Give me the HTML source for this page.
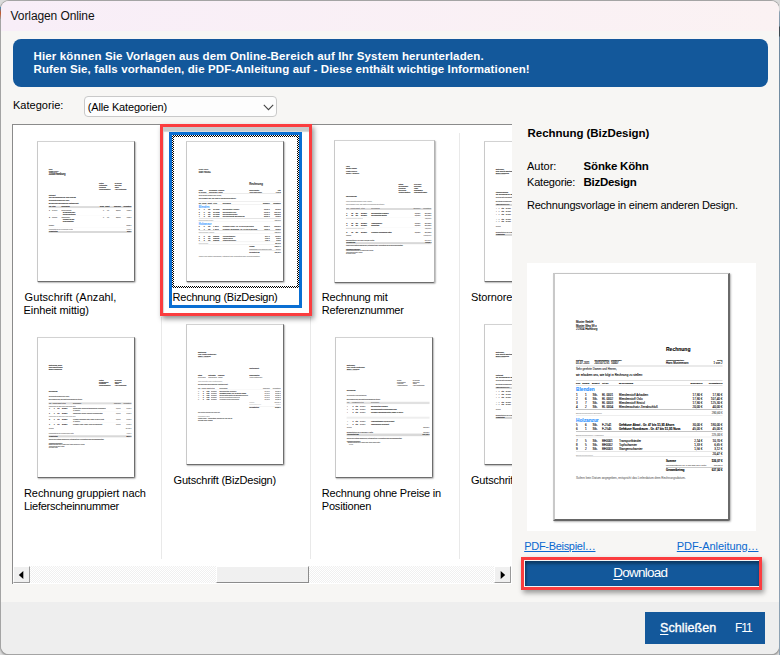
<!DOCTYPE html>
<html lang="de"><head><meta charset="utf-8"><title>Vorlagen Online</title>
<style>
*{box-sizing:border-box;margin:0;padding:0}
html,body{width:780px;height:655px;overflow:hidden}
body{position:relative;background:#dcdcdc;font-family:"Liberation Sans",sans-serif;font-size:11.5px;color:#000}
.abs,body>div,body>span,body>a{position:absolute}
#edgeR{z-index:3;left:779px;top:0;width:1px;height:655px;background:linear-gradient(#d8d8d8 0,#d8d8d8 10px,#8fa3b4 12px,#7d93a6 26px,#3c4a52 27px,#3c4a52 36px,#6f8aa0 37px,#8fa3b4 100%)}
#edgeL{z-index:3;left:0;top:7px;width:1px;height:12px;background:linear-gradient(#3f8fc0,#c8562a 50%,#9a9a9a)}
#win{left:1px;top:1px;width:778px;height:652.5px;border-radius:8px;overflow:hidden;background:#f7f6f4;box-shadow:0 0 0 1px #a4a4a4,0 1px 2px 1px rgba(0,0,0,.35)}
#tb{position:absolute;left:0;top:0;width:100%;height:30px;background:linear-gradient(90deg,#f8eef8,#fbf2f3)}
#ft{position:absolute;left:0;top:601px;width:100%;height:52px;background:#eeeeee}
#title{left:10px;top:9px;font-size:12px;line-height:15px;white-space:nowrap;color:#111}
#banner{left:13px;top:39px;width:755px;height:48px;border-radius:8px;background:#13589b}
#banner p{position:absolute;left:20.5px;white-space:nowrap;color:#fff;font-weight:bold;font-size:11.5px;line-height:13px}
.lbl{white-space:nowrap;line-height:13px;font-size:11px}
.lbl.b{font-size:11.5px}
#combo{left:84px;top:96px;width:193px;height:21px;border:1px solid #c9c9c9;border-radius:4px;background:#fdfdfd}
#combo span{position:absolute;left:3px;top:4px;font-size:11px;line-height:13px;white-space:nowrap}
#combo svg{position:absolute;left:178px;top:7px}
#list{left:12px;top:124px;width:500px;height:460px;background:#fff;border-top:1px solid #8b8b8b;border-left:1px solid #8b8b8b;overflow:hidden}
#list>*{position:absolute}
.col{top:8px;width:1px;height:426px;background:#e9e9e9}
.th{position:absolute;width:98px;height:141px;background:#fff;border-top:1px solid #d2d2d2;border-left:1px solid #c9c9c9;border-right:1px solid #6d6d6d;border-bottom:1px solid #6d6d6d;border-bottom-right-radius:2px;box-shadow:1px 1px 1.5px rgba(0,0,0,.28);overflow:hidden}
.pg{position:absolute;left:0;top:0;width:700px;height:984px;transform-origin:0 0;font-family:"Liberation Sans",sans-serif}
.pg span{position:absolute;white-space:nowrap;line-height:1.15}
.pg i{position:absolute;display:block}
.cap{font-size:11px;line-height:13px;white-space:nowrap}
#red{left:160px;top:124px;width:152px;height:192px;border:3px solid #fb3d3f;box-shadow:2px 3px 5px rgba(0,0,0,.42), inset 0 4px 0 #c9cbcb, inset 1px 5px 1px #d4d6d6}
#blue{left:169px;top:132px;width:133px;height:176px;border:3px solid #0a6fd3;background:#fff}
#dots{left:172px;top:135px;width:127px;height:153px;background:
 repeating-conic-gradient(#000 0 25%,#fff 0 50%) 0 0/2px 2px}
#dots b{position:absolute;left:2px;top:2px;right:2px;bottom:2px;background:#fff}
#sb{left:13px;top:566px;width:498px;height:17px;background:repeating-conic-gradient(#fff 0 25%,#f0f0f0 0 50%) 0 0/2px 2px}
.sbtn{position:absolute;top:0;width:17px;height:17px;background:#f0f0f0;border-top:1px solid #fff;border-left:1px solid #fff;border-right:1px solid #999;border-bottom:1px solid #999}
.sbtn svg{position:absolute;left:3px;top:3px}
#sth{position:absolute;left:203px;top:0;width:93px;height:17px;background:#f0f0f0;border-top:1px solid #fff;border-left:1px solid #fff;border-right:1px solid #8c8c8c;border-bottom:1px solid #8c8c8c}
.b{font-weight:bold}
#prev{left:527px;top:263px;width:229px;height:268px;background:#fff}
#ppage{position:absolute;left:26px;top:10px;width:177px;height:248px;background:#fff;border-top:1px solid #c4c4c4;border-left:2px solid #c9c9c9;border-right:2px solid #6a6a6a;border-bottom:2px solid #666;border-bottom-right-radius:2px;box-shadow:1px 1px 2px rgba(0,0,0,.3);overflow:hidden}
a.lk{color:#0a68d0;text-decoration:underline;font-size:11px;line-height:13px;white-space:nowrap;text-underline-offset:1px}
#dlred{left:521px;top:557px;width:241px;height:33px;background:#f4f4f4;border:3px solid #fb3d3f;box-shadow:2px 3px 5px rgba(0,0,0,.38)}
#dl{left:524.5px;top:560.5px;width:234px;height:25.5px;background:#13589b;box-shadow:inset 0 3px 3px rgba(0,0,0,.32),inset 2px 0 2px rgba(0,0,0,.18);color:#fff;text-align:center;font-size:13.5px;line-height:24px}
#close{left:645px;top:612px;width:120px;height:32px;background:#13589b;color:#fff;font-size:12.5px}
#cl1{font-weight:normal;-webkit-text-stroke:.35px #fff}
#close span{position:absolute;top:8px;line-height:16px;white-space:nowrap}
#cl2{font-size:12px}
u{text-decoration:underline;text-underline-offset:1.5px}
.cap span{display:inline-block}
#dlt{display:inline-block}
#c4,#c8{letter-spacing:-.2px}
#c4{letter-spacing:-.1px}
.th .pg{-webkit-text-stroke:.6px currentColor;opacity:.8}
#ppage .pg{-webkit-text-stroke:.35px currentColor}
#title{letter-spacing:-0.10px;transform:translateX(0.6px)}
#b1{letter-spacing:0.15px;transform:translateX(0.0px)}
#b2{letter-spacing:0.12px;transform:translateX(0.0px)}
#kat{letter-spacing:0.02px;transform:translateX(0.0px)}
#cmb{letter-spacing:-0.16px;transform:translateX(-0.2px)}
#c1a{letter-spacing:0.07px;transform:translateX(0.6px)}
#c1b{letter-spacing:-0.10px;transform:translateX(-0.4px)}
#c2{letter-spacing:-0.26px;transform:translateX(-0.4px)}
#c3a{letter-spacing:-0.18px;transform:translateX(-0.2px)}
#c3b{letter-spacing:-0.22px;transform:translateX(-0.2px)}
#c5a{letter-spacing:-0.07px;transform:translateX(0.0px)}
#c5b{letter-spacing:-0.26px;transform:translateX(0.0px)}
#c6{letter-spacing:-0.21px;transform:translateX(0.6px)}
#c7a{letter-spacing:-0.19px;transform:translateX(-0.2px)}
#c7b{letter-spacing:-0.20px;transform:translateX(-0.2px)}
#r1{letter-spacing:-0.05px;transform:translateX(0.6px)}
#r2{letter-spacing:0.00px;transform:translateX(0.0px)}
#r3{letter-spacing:-0.20px;transform:translateX(0.6px)}
#r4{letter-spacing:-0.20px;transform:translateX(0.0px)}
#r5{letter-spacing:-0.29px;transform:translateX(0.6px)}
#r6{letter-spacing:-0.23px;transform:translateX(0.0px)}
#l1{letter-spacing:-0.30px;transform:translateX(0.2px)}
#l2{letter-spacing:-0.06px;transform:translateX(-1.2px)}
#dlt{letter-spacing:-0.75px;transform:translateX(-1.2px)}
#cl1{letter-spacing:0.09px;transform:translateX(0.0px)}
#cl2{letter-spacing:-1.08px;transform:translateX(0.0px)}
</style></head>
<body>
<div id="edgeL"></div><div id="edgeR"></div>
<div id="win"><div id="tb"></div><div id="ft"></div></div>
<span id="title">Vorlagen Online</span>
<div id="banner"><p id="b1" style="top:11px">Hier können Sie Vorlagen aus dem Online-Bereich auf Ihr System herunterladen.</p><p id="b2" style="top:24px">Rufen Sie, falls vorhanden, die PDF-Anleitung auf - Diese enthält wichtige Informationen!</p></div>
<span id="kat" class="lbl" style="left:13px;top:99px">Kategorie:</span>
<div id="combo"><span id="cmb">(Alle Kategorien)</span><svg width="11" height="7" viewBox="0 0 11 7"><path d="M0.8 0.9 L5.5 5.6 L10.2 0.9" fill="none" stroke="#444" stroke-width="1.1"/></svg></div>
<div id="list">
 <i class="col" style="left:148px;top:192px;height:242px"></i><i class="col" style="left:297px;top:192px;height:242px"></i><i class="col" style="left:446px"></i>
 <div class="th" style="left:24px;top:16px"><div class="pg" style="transform:scale(.14,.1433)"><span style="top:187px;font-size:11.7px;letter-spacing:-0.82px;color:#000;left:76px;">Firma</span><span style="top:199px;font-size:13.0px;letter-spacing:-0.91px;color:#000;left:76px;">Muster GmbH</span><span style="top:211px;font-size:18.2px;letter-spacing:-1.27px;color:#000;font-weight:bold;left:76px;">22304 Hamburg</span><span style="top:285px;font-size:11.7px;letter-spacing:-0.82px;color:#000;font-weight:bold;left:436px;">Datum</span><span style="top:285px;font-size:11.7px;letter-spacing:-0.82px;color:#000;left:548px;">01.07.2011</span><span style="top:298px;font-size:11.7px;letter-spacing:-0.82px;color:#000;font-weight:bold;left:436px;">Gutschriftnr.</span><span style="top:298px;font-size:11.7px;letter-spacing:-0.82px;color:#000;left:548px;">2011-0012</span><span style="top:311px;font-size:11.7px;letter-spacing:-0.82px;color:#000;font-weight:bold;left:436px;">Kundennr.</span><span style="top:311px;font-size:11.7px;letter-spacing:-0.82px;color:#000;left:548px;">10007</span><span style="top:324px;font-size:11.7px;letter-spacing:-0.82px;color:#000;font-weight:bold;left:436px;">Ansprechpartner</span><span style="top:324px;font-size:11.7px;letter-spacing:-0.82px;color:#000;left:548px;">Hans Mustermann</span><span style="top:363px;font-size:11.7px;letter-spacing:-0.82px;color:#000;font-weight:bold;left:76px;">Gutschrift</span><span style="top:375px;font-size:16.9px;letter-spacing:-1.18px;color:#000;font-weight:bold;left:76px;">zur Rechnung Nr. 2011-0123</span><span style="top:398px;font-size:11.7px;letter-spacing:-0.82px;color:#000;left:76px;">Sehr geehrte Damen und Herren,</span><span style="top:419px;font-size:11.7px;letter-spacing:-0.82px;color:#000;font-weight:bold;left:76px;">wir schreiben Ihnen folgende Positionen gut:</span><i style="left:76px;top:447px;width:592px;height:14px;background:#d4d4d4"></i><span style="top:447px;font-size:10.4px;letter-spacing:-0.73px;color:#000;font-weight:bold;left:78px;">Pos</span><span style="top:447px;font-size:10.4px;letter-spacing:-0.73px;color:#000;font-weight:bold;left:100px;">Art.Nr.</span><span style="top:447px;font-size:10.4px;letter-spacing:-0.73px;color:#000;font-weight:bold;left:168px;">Bezeichnung</span><span style="top:447px;font-size:10.4px;letter-spacing:-0.73px;color:#000;font-weight:bold;right:230px;">Anzahl</span><span style="top:447px;font-size:10.4px;letter-spacing:-0.73px;color:#000;font-weight:bold;right:190px;">Einheit</span><span style="top:447px;font-size:10.4px;letter-spacing:-0.73px;color:#000;font-weight:bold;right:110px;">Einzelpreis</span><span style="top:447px;font-size:10.4px;letter-spacing:-0.73px;color:#000;font-weight:bold;right:34px;">Gesamtpreis</span><span style="top:469px;font-size:11.7px;letter-spacing:-0.82px;color:#000;left:78px;">1</span><span style="top:469px;font-size:11.7px;letter-spacing:-0.82px;color:#000;opacity:0.6;left:100px;">BL 0004</span><span style="top:469px;font-size:11.7px;letter-spacing:-0.82px;color:#000;opacity:0.7;left:168px;">Blendenaufsatz</span><span style="top:482px;font-size:11.7px;letter-spacing:-0.82px;color:#000;font-weight:bold;left:176px;">Zierabschluß links</span><span style="top:495px;font-size:11.7px;letter-spacing:-0.82px;color:#000;font-weight:bold;left:176px;">Sonderanfertigung</span><span style="top:469px;font-size:11.7px;letter-spacing:-0.82px;color:#000;opacity:0.6;right:230px;">2</span><span style="top:469px;font-size:11.7px;letter-spacing:-0.82px;color:#000;opacity:0.6;right:190px;">Stk.</span><span style="top:469px;font-size:11.7px;letter-spacing:-0.82px;color:#000;opacity:0.7;right:110px;">20,00 €</span><span style="top:469px;font-size:11.7px;letter-spacing:-0.82px;color:#000;opacity:0.7;right:34px;">40,00 €</span><i style="left:76px;top:515px;width:592px;height:1px;background:#e4e4e4"></i><span style="top:521px;font-size:11.7px;letter-spacing:-0.82px;color:#000;left:78px;">2</span><span style="top:521px;font-size:11.7px;letter-spacing:-0.82px;color:#000;opacity:0.6;left:100px;">BE0002</span><span style="top:521px;font-size:11.7px;letter-spacing:-0.82px;color:#000;opacity:0.7;left:168px;">Topfscharnier</span><span style="top:534px;font-size:11.7px;letter-spacing:-0.82px;color:#000;font-weight:bold;left:176px;">vernickelt 35 mm</span><span style="top:547px;font-size:11.7px;letter-spacing:-0.82px;color:#000;font-weight:bold;left:176px;">Schnellmontage</span><span style="top:521px;font-size:11.7px;letter-spacing:-0.82px;color:#000;opacity:0.6;right:230px;">2</span><span style="top:521px;font-size:11.7px;letter-spacing:-0.82px;color:#000;opacity:0.6;right:190px;">Stk.</span><span style="top:521px;font-size:11.7px;letter-spacing:-0.82px;color:#000;opacity:0.7;right:110px;">20,00 €</span><span style="top:521px;font-size:11.7px;letter-spacing:-0.82px;color:#000;opacity:0.7;right:34px;">40,00 €</span><span style="top:575px;font-size:11.7px;letter-spacing:-0.82px;color:#000;font-weight:bold;opacity:0.7;left:76px;">Summe</span><span style="top:575px;font-size:11.7px;letter-spacing:-0.82px;color:#000;opacity:0.7;right:34px;">80,00 €</span><i style="left:76px;top:593px;width:592px;height:1px;background:#e4e4e4"></i><span style="top:601px;font-size:11.7px;letter-spacing:-0.82px;color:#000;opacity:0.55;left:76px;">Mehrwertsteuer 19 % auf 80,00 € netto</span><span style="top:601px;font-size:11.7px;letter-spacing:-0.82px;color:#000;opacity:0.5;right:34px;">15,20 €</span><i style="left:76px;top:621px;width:592px;height:14px;background:#d0d0d0"></i><span style="top:621px;font-size:10.4px;letter-spacing:-0.73px;color:#000;font-weight:bold;left:78px;">Gesamtbetrag</span><span style="top:621px;font-size:10.4px;letter-spacing:-0.73px;color:#000;font-weight:bold;right:34px;">95,20 €</span></div></div>
 <div class="th" style="left:321px;top:15px;width:101px;height:143px;border-right-color:#b2b2b2"><div class="pg" style="transform:scale(.1443,.1453)"><span style="top:170.2px;font-size:11.7px;letter-spacing:-0.82px;color:#000;left:76px;">Firma</span><span style="top:182.5px;font-size:13.0px;letter-spacing:-0.91px;color:#000;font-weight:bold;left:76px;">Muster GmbH</span><span style="top:200.9px;font-size:13.0px;letter-spacing:-0.91px;color:#000;left:76px;">Muster Weg 99</span><span style="top:213.2px;font-size:14.3px;letter-spacing:-1.0px;color:#000;left:76px;">22304 Hamburg</span><span style="top:295.1px;font-size:11.7px;letter-spacing:-0.82px;color:#000;font-weight:bold;left:440px;">Datum</span><span style="top:295.1px;font-size:11.7px;letter-spacing:-0.82px;color:#000;font-weight:bold;left:548px;">01.07.2011</span><span style="top:307.3px;font-size:11.7px;letter-spacing:-0.82px;color:#000;font-weight:bold;left:440px;">Rechnungsnr.</span><span style="top:307.3px;font-size:11.7px;letter-spacing:-0.82px;color:#000;font-weight:bold;left:548px;">2011-0123</span><span style="top:319.6px;font-size:11.7px;letter-spacing:-0.82px;color:#000;font-weight:bold;left:440px;">Kundennr.</span><span style="top:319.6px;font-size:11.7px;letter-spacing:-0.82px;color:#000;font-weight:bold;left:548px;">10007</span><span style="top:331.9px;font-size:11.7px;letter-spacing:-0.82px;color:#000;font-weight:bold;left:440px;">Referenznr.</span><span style="top:331.9px;font-size:11.7px;letter-spacing:-0.82px;color:#000;font-weight:bold;left:548px;">REF-558812</span><span style="top:344.2px;font-size:11.7px;letter-spacing:-0.82px;color:#000;font-weight:bold;left:440px;">Ansprechpartner</span><span style="top:344.2px;font-size:11.7px;letter-spacing:-0.82px;color:#000;font-weight:bold;left:548px;">Hans Mustermann</span><span style="top:366.7px;font-size:16.9px;letter-spacing:-1.18px;color:#000;font-weight:bold;left:76px;">Rechnung</span><span style="top:407.6px;font-size:14.3px;letter-spacing:-1.0px;color:#000;opacity:0.5;left:76px;">Sehr geehrte Damen und Herren,</span><span style="top:426.0px;font-size:14.3px;letter-spacing:-1.0px;color:#000;opacity:0.5;left:76px;">wir erlauben uns, wie folgt in Rechnung zu stellen:</span><i style="left:76px;top:460.7px;width:592px;height:14px;background:#d4d4d4"></i><span style="top:460.8px;font-size:10.4px;letter-spacing:-0.73px;color:#000;font-weight:bold;opacity:0.5;left:78px;">Pos</span><span style="top:460.8px;font-size:10.4px;letter-spacing:-0.73px;color:#000;font-weight:bold;opacity:0.5;left:108px;">Anzahl</span><span style="top:460.8px;font-size:10.4px;letter-spacing:-0.73px;color:#000;font-weight:bold;opacity:0.5;left:142px;">Einheit</span><span style="top:460.8px;font-size:10.4px;letter-spacing:-0.73px;color:#000;font-weight:bold;opacity:0.5;left:180px;">Art.Nr.</span><span style="top:460.8px;font-size:10.4px;letter-spacing:-0.73px;color:#000;font-weight:bold;opacity:0.5;left:252px;">Bezeichnung</span><span style="top:460.8px;font-size:10.4px;letter-spacing:-0.73px;color:#000;font-weight:bold;opacity:0.5;right:110px;">Einzelpreis</span><span style="top:460.8px;font-size:10.4px;letter-spacing:-0.73px;color:#000;font-weight:bold;opacity:0.5;right:34px;">Gesamtpreis</span><span style="top:489.4px;font-size:13.0px;letter-spacing:-0.91px;color:#000;font-weight:bold;left:78px;">1</span><span style="top:489.4px;font-size:13.0px;letter-spacing:-0.91px;color:#000;left:112px;">12</span><span style="top:489.4px;font-size:13.0px;letter-spacing:-0.91px;color:#000;left:142px;">Stk.</span><span style="top:489.4px;font-size:13.0px;letter-spacing:-0.91px;color:#000;font-weight:bold;left:180px;">BL0001</span><span style="top:489.4px;font-size:13.0px;letter-spacing:-0.91px;color:#000;font-weight:bold;left:252px;">Blendenstoff Arkadien</span><span style="top:489.4px;font-size:13.0px;letter-spacing:-0.91px;color:#000;opacity:0.8;right:110px;">17,90 €</span><span style="top:489.4px;font-size:13.0px;letter-spacing:-0.91px;color:#000;opacity:0.8;right:34px;">214,80 €</span><span style="top:507.8px;font-size:13.0px;letter-spacing:-0.91px;color:#000;font-weight:bold;left:78px;">2</span><span style="top:507.8px;font-size:13.0px;letter-spacing:-0.91px;color:#000;left:112px;">12</span><span style="top:507.8px;font-size:13.0px;letter-spacing:-0.91px;color:#000;left:142px;">Stk.</span><span style="top:507.8px;font-size:13.0px;letter-spacing:-0.91px;color:#000;font-weight:bold;left:180px;">BL0001</span><span style="top:507.8px;font-size:13.0px;letter-spacing:-0.91px;color:#000;font-weight:bold;left:252px;">Blendenstoff Bristol</span><span style="top:507.8px;font-size:13.0px;letter-spacing:-0.91px;color:#000;opacity:0.8;right:110px;">17,90 €</span><span style="top:507.8px;font-size:13.0px;letter-spacing:-0.91px;color:#000;opacity:0.8;right:34px;">214,80 €</span><i style="left:76px;top:526.2px;width:592px;height:1px;background:#e0e0e0"></i><span style="top:528.3px;font-size:11.7px;letter-spacing:-0.82px;color:#000;opacity:0.25;left:76px;">Zwischensumme Blenden</span><span style="top:528.3px;font-size:13.0px;letter-spacing:-0.91px;color:#000;opacity:0.6;right:34px;">429,60 €</span><span style="top:556.9px;font-size:13.0px;letter-spacing:-0.91px;color:#000;font-weight:bold;left:78px;">3</span><span style="top:556.9px;font-size:13.0px;letter-spacing:-0.91px;color:#000;left:112px;">12</span><span style="top:556.9px;font-size:13.0px;letter-spacing:-0.91px;color:#000;left:142px;">Stk.</span><span style="top:556.9px;font-size:13.0px;letter-spacing:-0.91px;color:#000;font-weight:bold;left:180px;">BL0001</span><span style="top:556.9px;font-size:13.0px;letter-spacing:-0.91px;color:#000;font-weight:bold;left:252px;">Topfscharnier</span><span style="top:556.9px;font-size:13.0px;letter-spacing:-0.91px;color:#000;opacity:0.8;right:110px;">17,90 €</span><span style="top:556.9px;font-size:13.0px;letter-spacing:-0.91px;color:#000;opacity:0.8;right:34px;">214,80 €</span><span style="top:575.4px;font-size:13.0px;letter-spacing:-0.91px;color:#000;font-weight:bold;left:78px;">4</span><span style="top:575.4px;font-size:13.0px;letter-spacing:-0.91px;color:#000;left:112px;">12</span><span style="top:575.4px;font-size:13.0px;letter-spacing:-0.91px;color:#000;left:142px;">Stk.</span><span style="top:575.4px;font-size:13.0px;letter-spacing:-0.91px;color:#000;font-weight:bold;left:180px;">BL0001</span><span style="top:575.4px;font-size:13.0px;letter-spacing:-0.91px;color:#000;font-weight:bold;left:252px;">Bandstahl</span><span style="top:575.4px;font-size:13.0px;letter-spacing:-0.91px;color:#000;opacity:0.8;right:110px;">17,90 €</span><span style="top:575.4px;font-size:13.0px;letter-spacing:-0.91px;color:#000;opacity:0.8;right:34px;">214,80 €</span><i style="left:76px;top:595.8px;width:592px;height:1px;background:#e0e0e0"></i><span style="top:597.9px;font-size:11.7px;letter-spacing:-0.82px;color:#000;opacity:0.25;left:76px;">Zwischensumme Beschläge</span><span style="top:597.9px;font-size:13.0px;letter-spacing:-0.91px;color:#000;opacity:0.6;right:34px;">429,60 €</span><span style="top:622.4px;font-size:13.0px;letter-spacing:-0.91px;color:#000;font-weight:bold;left:78px;">5</span><span style="top:622.4px;font-size:13.0px;letter-spacing:-0.91px;color:#000;left:112px;">12</span><span style="top:622.4px;font-size:13.0px;letter-spacing:-0.91px;color:#000;left:142px;">Stk.</span><span style="top:622.4px;font-size:13.0px;letter-spacing:-0.91px;color:#000;font-weight:bold;left:180px;">BL0001</span><span style="top:622.4px;font-size:13.0px;letter-spacing:-0.91px;color:#000;font-weight:bold;left:252px;">Gehäuse Nussbaum natur</span><span style="top:622.4px;font-size:13.0px;letter-spacing:-0.91px;color:#000;opacity:0.8;right:110px;">17,90 €</span><span style="top:622.4px;font-size:13.0px;letter-spacing:-0.91px;color:#000;opacity:0.8;right:34px;">214,80 €</span><span style="top:642.9px;font-size:11.7px;letter-spacing:-0.82px;color:#000;opacity:0.7;left:76px;">Summe</span><span style="top:642.9px;font-size:13.0px;letter-spacing:-0.91px;color:#000;opacity:0.6;right:34px;">1.073,99 €</span><span style="top:675.6px;font-size:11.7px;letter-spacing:-0.82px;color:#000;font-weight:bold;opacity:0.8;left:76px;">Mehrwertsteuer 19 % auf 1.073,99 € netto</span><span style="top:675.6px;font-size:13.0px;letter-spacing:-0.91px;color:#000;opacity:0.6;right:34px;">204,06 €</span><i style="left:76px;top:696.0px;width:592px;height:14px;background:#cfcfcf"></i><span style="top:696.1px;font-size:10.4px;letter-spacing:-0.73px;color:#000;font-weight:bold;left:78px;">Gesamtbetrag</span><span style="top:696.1px;font-size:10.4px;letter-spacing:-0.73px;color:#000;font-weight:bold;right:34px;">1.278,05 €</span><span style="top:714.5px;font-size:11.7px;letter-spacing:-0.82px;color:#000;font-weight:bold;opacity:0.8;left:76px;">Sofern kein Datum angegeben, entspricht das Lieferdatum dem Rechnungsdatum.</span><span style="top:739.0px;font-size:10.4px;letter-spacing:-0.73px;color:#000;font-weight:bold;left:76px;">Zahlungsbedingungen</span><span style="top:749.3px;font-size:10.4px;letter-spacing:-0.73px;color:#000;font-weight:bold;opacity:0.7;left:76px;">Zahlbar innerhalb von 14 Tagen ohne Abzug.</span><span style="top:759.5px;font-size:10.4px;letter-spacing:-0.73px;color:#000;opacity:0.7;left:76px;">Vielen Dank für Ihren Auftrag.</span><span style="top:769.7px;font-size:10.4px;letter-spacing:-0.73px;color:#000;opacity:0.7;left:76px;">Ihr Muster-Team</span></div></div>
 <div class="th" style="left:471px;top:16px"><div class="pg" style="transform:scale(.14,.1433)"><span style="top:183.5px;font-size:11.7px;letter-spacing:-0.82px;color:#000;font-weight:bold;left:76px;">Musterfirma</span><span style="top:197.1px;font-size:13.0px;letter-spacing:-0.91px;color:#000;font-weight:bold;left:76px;">Frau Annette Mustermann</span><span style="top:210.7px;font-size:14.3px;letter-spacing:-1.0px;color:#000;font-weight:bold;left:76px;">22304 Hamburg</span><i style="left:76px;top:228.5px;width:70px;height:1px;background:#444"></i><span style="top:342.0px;font-size:13.0px;letter-spacing:-0.91px;color:#000;font-weight:bold;left:76px;">Stornorechnung</span><span style="top:357.8px;font-size:14.3px;letter-spacing:-1.0px;color:#000;font-weight:bold;left:76px;">zur Rechnung Nr. 2011-0123 vom 01.07.2011</span><span style="top:382.7px;font-size:11.7px;letter-spacing:-0.82px;color:#000;font-weight:bold;opacity:0.8;left:76px;">Sehr geehrte Frau Mustermann,</span><span style="top:407.6px;font-size:11.7px;letter-spacing:-0.82px;color:#000;font-weight:bold;opacity:0.8;left:76px;">wir stornieren folgende Positionen:</span><i style="left:76px;top:432.3px;width:592px;height:14px;background:#cfcfcf"></i><span style="top:432.5px;font-size:10.4px;letter-spacing:-0.73px;color:#000;font-weight:bold;opacity:0.8;left:78px;">Pos</span><span style="top:432.5px;font-size:10.4px;letter-spacing:-0.73px;color:#000;font-weight:bold;opacity:0.8;left:88px;">Anzahl</span><span style="top:432.5px;font-size:10.4px;letter-spacing:-0.73px;color:#000;font-weight:bold;opacity:0.8;left:118px;">Einheit</span><span style="top:432.5px;font-size:10.4px;letter-spacing:-0.73px;color:#000;font-weight:bold;opacity:0.8;left:148px;">Art.Nr.</span><span style="top:459.7px;font-size:11.7px;letter-spacing:-0.82px;color:#000;opacity:0.4;left:78px;">1</span><span style="top:459.7px;font-size:11.7px;letter-spacing:-0.82px;color:#000;opacity:0.6;left:96px;">3</span><span style="top:459.7px;font-size:11.7px;letter-spacing:-0.82px;color:#000;font-weight:bold;left:118px;">Stk.</span><span style="top:459.7px;font-size:11.7px;letter-spacing:-0.82px;color:#000;font-weight:bold;opacity:0.8;left:148px;">BL0001</span><span style="top:480.1px;font-size:11.7px;letter-spacing:-0.82px;color:#000;opacity:0.4;left:78px;">2</span><span style="top:480.1px;font-size:11.7px;letter-spacing:-0.82px;color:#000;opacity:0.6;left:96px;">3</span><span style="top:480.1px;font-size:11.7px;letter-spacing:-0.82px;color:#000;font-weight:bold;left:118px;">Stk.</span><span style="top:480.1px;font-size:11.7px;letter-spacing:-0.82px;color:#000;font-weight:bold;opacity:0.8;left:148px;">BL0001</span><span style="top:500.5px;font-size:11.7px;letter-spacing:-0.82px;color:#000;opacity:0.4;left:78px;">3</span><span style="top:500.5px;font-size:11.7px;letter-spacing:-0.82px;color:#000;opacity:0.6;left:96px;">3</span><span style="top:500.5px;font-size:11.7px;letter-spacing:-0.82px;color:#000;font-weight:bold;left:118px;">Stk.</span><span style="top:500.5px;font-size:11.7px;letter-spacing:-0.82px;color:#000;font-weight:bold;opacity:0.8;left:148px;">BL0001</span><span style="top:529.9px;font-size:11.7px;letter-spacing:-0.82px;color:#000;opacity:0.4;left:78px;">4</span><span style="top:529.9px;font-size:11.7px;letter-spacing:-0.82px;color:#000;opacity:0.6;left:96px;">3</span><span style="top:529.9px;font-size:11.7px;letter-spacing:-0.82px;color:#000;font-weight:bold;left:118px;">Stk.</span><span style="top:529.9px;font-size:11.7px;letter-spacing:-0.82px;color:#000;font-weight:bold;opacity:0.8;left:148px;">BL0001</span><span style="top:550.3px;font-size:11.7px;letter-spacing:-0.82px;color:#000;opacity:0.4;left:78px;">5</span><span style="top:550.3px;font-size:11.7px;letter-spacing:-0.82px;color:#000;opacity:0.6;left:96px;">3</span><span style="top:550.3px;font-size:11.7px;letter-spacing:-0.82px;color:#000;font-weight:bold;left:118px;">Stk.</span><span style="top:550.3px;font-size:11.7px;letter-spacing:-0.82px;color:#000;font-weight:bold;opacity:0.8;left:148px;">BL0001</span><span style="top:579.7px;font-size:11.7px;letter-spacing:-0.82px;color:#000;opacity:0.6;left:76px;">Summe</span><span style="top:620.5px;font-size:11.7px;letter-spacing:-0.82px;color:#000;font-weight:bold;opacity:0.8;left:76px;">Mehrwertsteuer 19 % auf 214,80 €</span><i style="left:76px;top:640.6px;width:592px;height:14px;background:#c4c4c4"></i><span style="top:640.8px;font-size:10.4px;letter-spacing:-0.73px;color:#000;font-weight:bold;left:78px;">Gesamtbetrag</span></div></div>
 <div class="th" style="left:24px;top:212px"><div class="pg" style="transform:scale(.14,.1433)"><span style="top:183px;font-size:11.7px;letter-spacing:-0.82px;color:#000;font-weight:bold;left:76px;">Mustermann_Bauer</span><span style="top:195px;font-size:13.0px;letter-spacing:-0.91px;color:#000;font-weight:bold;left:76px;">Hans Mustermann</span><span style="top:207px;font-size:14.3px;letter-spacing:-1.0px;color:#000;font-weight:bold;left:76px;">22304 Hamburg</span><span style="top:287px;font-size:11.7px;letter-spacing:-0.82px;color:#000;font-weight:bold;left:436px;">Datum</span><span style="top:287px;font-size:11.7px;letter-spacing:-0.82px;color:#000;left:548px;">01.07.2011</span><span style="top:300px;font-size:11.7px;letter-spacing:-0.82px;color:#000;font-weight:bold;left:436px;">Rechnungsnr.</span><span style="top:300px;font-size:11.7px;letter-spacing:-0.82px;color:#000;left:548px;">2011-0123</span><span style="top:313px;font-size:11.7px;letter-spacing:-0.82px;color:#000;font-weight:bold;left:436px;">Kundennr.</span><span style="top:313px;font-size:11.7px;letter-spacing:-0.82px;color:#000;left:548px;">10007</span><span style="top:326px;font-size:11.7px;letter-spacing:-0.82px;color:#000;font-weight:bold;left:436px;">Ansprechpartner</span><span style="top:326px;font-size:11.7px;letter-spacing:-0.82px;color:#000;left:548px;">Hans Mustermann</span><span style="top:363px;font-size:14.3px;letter-spacing:-1.0px;color:#000;font-weight:bold;left:76px;">Rechnung</span><span style="top:403px;font-size:11.7px;letter-spacing:-0.82px;color:#000;opacity:0.8;left:76px;">Sehr geehrte Damen und Herren,</span><span style="top:423px;font-size:11.7px;letter-spacing:-0.82px;color:#000;font-weight:bold;opacity:0.8;left:76px;">wir erlauben uns, wie folgt in Rechnung zu stellen:</span><i style="left:76px;top:449px;width:592px;height:14px;background:#d6d6d6"></i><span style="top:449px;font-size:10.4px;letter-spacing:-0.73px;color:#000;font-weight:bold;opacity:0.7;left:78px;">Pos</span><span style="top:449px;font-size:10.4px;letter-spacing:-0.73px;color:#000;font-weight:bold;opacity:0.7;left:104px;">Anzahl</span><span style="top:449px;font-size:10.4px;letter-spacing:-0.73px;color:#000;font-weight:bold;opacity:0.7;left:138px;">Einheit</span><span style="top:449px;font-size:10.4px;letter-spacing:-0.73px;color:#000;font-weight:bold;opacity:0.7;left:172px;">Art.Nr.</span><span style="top:449px;font-size:10.4px;letter-spacing:-0.73px;color:#000;font-weight:bold;opacity:0.7;left:250px;">Bezeichnung</span><span style="top:449px;font-size:10.4px;letter-spacing:-0.73px;color:#000;font-weight:bold;opacity:0.6;right:110px;">Einzelpreis</span><span style="top:449px;font-size:10.4px;letter-spacing:-0.73px;color:#000;font-weight:bold;opacity:0.6;right:34px;">Gesamtpreis</span><span style="top:471px;font-size:11.7px;letter-spacing:-0.82px;color:#000;opacity:0.6;left:76px;">Lieferschein Nr. 2011-0456 vom 28.06.2011</span><span style="top:487px;font-size:11.7px;letter-spacing:-0.82px;color:#000;font-weight:bold;left:78px;">1</span><span style="top:487px;font-size:11.7px;letter-spacing:-0.82px;color:#000;left:112px;">3</span><span style="top:487px;font-size:11.7px;letter-spacing:-0.82px;color:#000;left:138px;">Stk.</span><span style="top:487px;font-size:11.7px;letter-spacing:-0.82px;color:#000;font-weight:bold;left:172px;">BL0001</span><span style="top:487px;font-size:11.7px;letter-spacing:-0.82px;color:#000;opacity:0.8;left:250px;">Blendenstoff Arkadien mit Zierabschluß, cremefarben</span><span style="top:498px;font-size:11.7px;letter-spacing:-0.82px;color:#000;font-weight:bold;opacity:0.7;left:250px;">(lt. Muster)</span><span style="top:487px;font-size:11.7px;letter-spacing:-0.82px;color:#000;opacity:0.6;right:110px;">17,90 €</span><span style="top:487px;font-size:11.7px;letter-spacing:-0.82px;color:#000;opacity:0.6;right:34px;">53,70 €</span><i style="left:76px;top:513px;width:592px;height:1px;background:#e4e4e4"></i><span style="top:519px;font-size:11.7px;letter-spacing:-0.82px;color:#000;font-weight:bold;left:78px;">2</span><span style="top:519px;font-size:11.7px;letter-spacing:-0.82px;color:#000;left:112px;">3</span><span style="top:519px;font-size:11.7px;letter-spacing:-0.82px;color:#000;left:138px;">Stk.</span><span style="top:519px;font-size:11.7px;letter-spacing:-0.82px;color:#000;font-weight:bold;left:172px;">BL0001</span><span style="top:519px;font-size:11.7px;letter-spacing:-0.82px;color:#000;opacity:0.8;left:250px;">Topfscharnier 35 mm vernickelt Schnellmontage</span><span style="top:519px;font-size:11.7px;letter-spacing:-0.82px;color:#000;opacity:0.6;right:110px;">17,90 €</span><span style="top:519px;font-size:11.7px;letter-spacing:-0.82px;color:#000;opacity:0.6;right:34px;">53,70 €</span><span style="top:543px;font-size:11.7px;letter-spacing:-0.82px;color:#000;opacity:0.45;left:76px;">Lieferschein Nr. 2011-0461 vom 30.06.2011</span><span style="top:561px;font-size:11.7px;letter-spacing:-0.82px;color:#000;font-weight:bold;left:78px;">3</span><span style="top:561px;font-size:11.7px;letter-spacing:-0.82px;color:#000;left:112px;">3</span><span style="top:561px;font-size:11.7px;letter-spacing:-0.82px;color:#000;left:138px;">Stk.</span><span style="top:561px;font-size:11.7px;letter-spacing:-0.82px;color:#000;font-weight:bold;left:172px;">BL0001</span><span style="top:561px;font-size:11.7px;letter-spacing:-0.82px;color:#000;opacity:0.8;left:250px;">Gehäuse Nussbaum natur, Größe 47 bis 51, geölt</span><span style="top:572px;font-size:11.7px;letter-spacing:-0.82px;color:#000;font-weight:bold;opacity:0.7;left:250px;">(lt. Muster)</span><span style="top:561px;font-size:11.7px;letter-spacing:-0.82px;color:#000;opacity:0.6;right:110px;">17,90 €</span><span style="top:561px;font-size:11.7px;letter-spacing:-0.82px;color:#000;opacity:0.6;right:34px;">53,70 €</span><i style="left:76px;top:587px;width:592px;height:1px;background:#e4e4e4"></i><span style="top:593px;font-size:11.7px;letter-spacing:-0.82px;color:#000;font-weight:bold;left:78px;">4</span><span style="top:593px;font-size:11.7px;letter-spacing:-0.82px;color:#000;left:112px;">3</span><span style="top:593px;font-size:11.7px;letter-spacing:-0.82px;color:#000;left:138px;">Stk.</span><span style="top:593px;font-size:11.7px;letter-spacing:-0.82px;color:#000;font-weight:bold;left:172px;">BL0001</span><span style="top:593px;font-size:11.7px;letter-spacing:-0.82px;color:#000;opacity:0.8;left:250px;">Gehäuse Akazie, Größe 47 bis 51 unbehandelt</span><span style="top:593px;font-size:11.7px;letter-spacing:-0.82px;color:#000;opacity:0.6;right:110px;">17,90 €</span><span style="top:593px;font-size:11.7px;letter-spacing:-0.82px;color:#000;opacity:0.6;right:34px;">53,70 €</span><span style="top:621px;font-size:11.7px;letter-spacing:-0.82px;color:#000;opacity:0.6;left:76px;">Summe</span><span style="top:621px;font-size:11.7px;letter-spacing:-0.82px;color:#000;opacity:0.6;right:34px;">214,80 €</span><span style="top:657px;font-size:11.7px;letter-spacing:-0.82px;color:#000;opacity:0.6;left:76px;">Mehrwertsteuer 19 % auf 214,80 € netto</span><span style="top:657px;font-size:11.7px;letter-spacing:-0.82px;color:#000;opacity:0.5;right:34px;">40,81 €</span><i style="left:76px;top:679px;width:592px;height:14px;background:#cfcfcf"></i><span style="top:679px;font-size:10.4px;letter-spacing:-0.73px;color:#000;font-weight:bold;left:78px;">Gesamtbetrag</span><span style="top:679px;font-size:10.4px;letter-spacing:-0.73px;color:#000;font-weight:bold;right:34px;">255,61 €</span><span style="top:703px;font-size:11.7px;letter-spacing:-0.82px;color:#000;font-weight:bold;opacity:0.8;left:76px;">Sofern kein Datum angegeben, entspricht das Lieferdatum dem Rechnungsdatum.</span><span style="top:729px;font-size:10.4px;letter-spacing:-0.73px;color:#000;font-weight:bold;opacity:0.8;left:76px;">Zahlungsbedingungen</span><span style="top:739px;font-size:10.4px;letter-spacing:-0.73px;color:#000;opacity:0.7;left:76px;">Zahlbar innerhalb von 14 Tagen ohne Abzug, danach 2 % Verzug.</span><span style="top:749px;font-size:10.4px;letter-spacing:-0.73px;color:#000;opacity:0.7;left:76px;">Vielen Dank für Ihren Auftrag.</span><span style="top:759px;font-size:10.4px;letter-spacing:-0.73px;color:#000;opacity:0.7;left:76px;">Ihr Muster-Team</span></div></div>
 <div class="th" style="left:173px;top:199px"><div class="pg" style="transform:scale(.14,.1433)"><span style="top:180.8px;font-size:11.7px;letter-spacing:-0.82px;color:#000;font-weight:bold;left:78px;">Musterfirma</span><span style="top:194.9px;font-size:13.0px;letter-spacing:-0.91px;color:#000;left:78px;">Frau Annette Mustermann</span><span style="top:209.0px;font-size:14.3px;letter-spacing:-1.0px;color:#000;left:78px;">22304 Hamburg</span><i style="left:78px;top:225.2px;width:76px;height:1px;background:#555"></i><span style="top:289.8px;font-size:16.9px;letter-spacing:-1.18px;color:#000;font-weight:bold;left:444px;">Gutschrift</span><span style="top:346.4px;font-size:10.4px;letter-spacing:-0.73px;color:#000;font-weight:bold;left:78px;">Datum</span><span style="top:346.4px;font-size:10.4px;letter-spacing:-0.73px;color:#000;font-weight:bold;left:152px;">Gutschriftnr.</span><span style="top:346.4px;font-size:10.4px;letter-spacing:-0.73px;color:#000;font-weight:bold;left:222px;">Kundennr.</span><span style="top:346.4px;font-size:10.4px;letter-spacing:-0.73px;color:#000;font-weight:bold;left:444px;">Ansprechpartner</span><span style="top:358.5px;font-size:13.0px;letter-spacing:-0.91px;color:#000;opacity:0.6;left:78px;">01.07.2011</span><span style="top:358.5px;font-size:13.0px;letter-spacing:-0.91px;color:#000;opacity:0.6;left:152px;">2011071231</span><span style="top:358.5px;font-size:13.0px;letter-spacing:-0.91px;color:#000;opacity:0.6;left:222px;">10007</span><span style="top:358.5px;font-size:13.0px;letter-spacing:-0.91px;color:#000;opacity:0.6;left:444px;">Hans Mustermann</span><span style="top:382.8px;font-size:14.3px;letter-spacing:-1.0px;color:#000;opacity:0.4;left:78px;">Sehr geehrte Frau Mustermann,</span><span style="top:407.0px;font-size:11.7px;letter-spacing:-0.82px;color:#000;font-weight:bold;opacity:0.8;left:78px;">wir schreiben Ihnen folgende Positionen gut:</span><span style="top:437.3px;font-size:10.4px;letter-spacing:-0.73px;color:#000;font-weight:bold;opacity:0.7;left:78px;">Pos</span><span style="top:437.3px;font-size:10.4px;letter-spacing:-0.73px;color:#000;font-weight:bold;opacity:0.7;left:104px;">Anzahl</span><span style="top:437.3px;font-size:10.4px;letter-spacing:-0.73px;color:#000;font-weight:bold;opacity:0.7;left:140px;">Einheit</span><span style="top:437.3px;font-size:10.4px;letter-spacing:-0.73px;color:#000;font-weight:bold;opacity:0.7;left:172px;">Art.Nr.</span><span style="top:437.3px;font-size:10.4px;letter-spacing:-0.73px;color:#000;font-weight:bold;opacity:0.7;left:232px;">Bezeichnung</span><span style="top:437.3px;font-size:10.4px;letter-spacing:-0.73px;color:#000;font-weight:bold;opacity:0.6;right:110px;">Einzelpreis</span><span style="top:437.3px;font-size:10.4px;letter-spacing:-0.73px;color:#000;font-weight:bold;opacity:0.6;right:32px;">Gesamtpreis</span><i style="left:78px;top:451.4px;width:590px;height:1px;background:#ccc"></i><span style="top:455.5px;font-size:13.0px;letter-spacing:-0.91px;color:#000;opacity:0.5;left:78px;">1</span><span style="top:455.5px;font-size:13.0px;letter-spacing:-0.91px;color:#000;left:112px;">3</span><span style="top:455.5px;font-size:13.0px;letter-spacing:-0.91px;color:#000;font-weight:bold;left:140px;">Stk.</span><span style="top:455.5px;font-size:13.0px;letter-spacing:-0.91px;color:#000;opacity:0.7;left:172px;">BL0001</span><span style="top:455.5px;font-size:13.0px;letter-spacing:-0.91px;color:#000;font-weight:bold;opacity:0.8;left:232px;">Blendenstoff Arkadien</span><span style="top:455.5px;font-size:13.0px;letter-spacing:-0.91px;color:#000;opacity:0.6;right:110px;">17,90 €</span><span style="top:455.5px;font-size:13.0px;letter-spacing:-0.91px;color:#000;opacity:0.7;right:32px;">53,70 €</span><span style="top:469.6px;font-size:13.0px;letter-spacing:-0.91px;color:#000;opacity:0.5;left:78px;">2</span><span style="top:469.6px;font-size:13.0px;letter-spacing:-0.91px;color:#000;left:112px;">3</span><span style="top:469.6px;font-size:13.0px;letter-spacing:-0.91px;color:#000;font-weight:bold;left:140px;">Stk.</span><span style="top:469.6px;font-size:13.0px;letter-spacing:-0.91px;color:#000;opacity:0.7;left:172px;">BL0001</span><span style="top:469.6px;font-size:13.0px;letter-spacing:-0.91px;color:#000;font-weight:bold;left:232px;">Gehäuse Akazi - Gr. 47 bis 51 Ahorn</span><span style="top:469.6px;font-size:13.0px;letter-spacing:-0.91px;color:#000;opacity:0.6;right:110px;">17,90 €</span><span style="top:469.6px;font-size:13.0px;letter-spacing:-0.91px;color:#000;opacity:0.7;right:32px;">53,70 €</span><span style="top:483.8px;font-size:13.0px;letter-spacing:-0.91px;color:#000;opacity:0.5;left:78px;">3</span><span style="top:483.8px;font-size:13.0px;letter-spacing:-0.91px;color:#000;left:112px;">3</span><span style="top:483.8px;font-size:13.0px;letter-spacing:-0.91px;color:#000;font-weight:bold;left:140px;">Stk.</span><span style="top:483.8px;font-size:13.0px;letter-spacing:-0.91px;color:#000;opacity:0.7;left:172px;">BL0001</span><span style="top:483.8px;font-size:13.0px;letter-spacing:-0.91px;color:#000;opacity:0.8;left:232px;">Blendenstoff Bristol mit Zierabschluß links</span><span style="top:483.8px;font-size:13.0px;letter-spacing:-0.91px;color:#000;opacity:0.6;right:110px;">17,90 €</span><span style="top:483.8px;font-size:13.0px;letter-spacing:-0.91px;color:#000;opacity:0.7;right:32px;">53,70 €</span><span style="top:497.9px;font-size:13.0px;letter-spacing:-0.91px;color:#000;opacity:0.5;left:78px;">4</span><span style="top:497.9px;font-size:13.0px;letter-spacing:-0.91px;color:#000;left:112px;">3</span><span style="top:497.9px;font-size:13.0px;letter-spacing:-0.91px;color:#000;font-weight:bold;left:140px;">Stk.</span><span style="top:497.9px;font-size:13.0px;letter-spacing:-0.91px;color:#000;opacity:0.7;left:172px;">BL0001</span><span style="top:497.9px;font-size:13.0px;letter-spacing:-0.91px;color:#000;opacity:0.6;left:232px;">Blendenaufsatz Zierabschluß</span><span style="top:497.9px;font-size:13.0px;letter-spacing:-0.91px;color:#000;opacity:0.6;right:110px;">17,90 €</span><span style="top:497.9px;font-size:13.0px;letter-spacing:-0.91px;color:#000;opacity:0.7;right:32px;">53,70 €</span><span style="top:512.0px;font-size:13.0px;letter-spacing:-0.91px;color:#000;opacity:0.5;left:78px;">5</span><span style="top:512.0px;font-size:13.0px;letter-spacing:-0.91px;color:#000;left:112px;">3</span><span style="top:512.0px;font-size:13.0px;letter-spacing:-0.91px;color:#000;font-weight:bold;left:140px;">Stk.</span><span style="top:512.0px;font-size:13.0px;letter-spacing:-0.91px;color:#000;opacity:0.7;left:172px;">BL0001</span><span style="top:512.0px;font-size:13.0px;letter-spacing:-0.91px;color:#000;opacity:0.7;left:232px;">Gehäuse Nuss unbehandelt</span><span style="top:512.0px;font-size:13.0px;letter-spacing:-0.91px;color:#000;opacity:0.6;right:110px;">17,90 €</span><span style="top:512.0px;font-size:13.0px;letter-spacing:-0.91px;color:#000;opacity:0.7;right:32px;">53,70 €</span><span style="top:530.2px;font-size:11.7px;letter-spacing:-0.82px;color:#000;opacity:0.3;left:444px;">Summe</span><span style="top:530.2px;font-size:13.0px;letter-spacing:-0.91px;color:#000;opacity:0.5;right:32px;">268,50 €</span><span style="top:548.4px;font-size:10.4px;letter-spacing:-0.73px;color:#000;opacity:0.2;left:444px;">Mehrwertsteuer 19 %</span><span style="top:548.4px;font-size:11.7px;letter-spacing:-0.82px;color:#000;opacity:0.3;right:32px;">51,02 €</span><i style="left:444px;top:566.6px;width:224px;height:1px;background:#aaa"></i><span style="top:568.6px;font-size:11.7px;letter-spacing:-0.82px;color:#000;font-weight:bold;left:444px;">Gesamtbetrag</span><span style="top:568.6px;font-size:11.7px;letter-spacing:-0.82px;color:#000;font-weight:bold;right:32px;">319,52 €</span><span style="top:602.9px;font-size:11.7px;letter-spacing:-0.82px;color:#000;opacity:0.7;left:78px;">Den Betrag schreiben wir Ihnen gut.</span><span style="top:635.3px;font-size:9.1px;letter-spacing:-0.64px;color:#000;opacity:0.4;left:78px;">Mit freundlichen Grüßen</span><span style="top:645.4px;font-size:11.7px;letter-spacing:-0.82px;color:#000;opacity:0.8;left:78px;">Muster GmbH – Buchhaltung, Telefon 040 / 123 456 78</span><span style="top:657.5px;font-size:10.4px;letter-spacing:-0.73px;color:#000;opacity:0.8;left:78px;">Ihr Muster-Team Hamburg</span></div></div>
 <div class="th" style="left:322px;top:212px"><div class="pg" style="transform:scale(.14,.1433)"><span style="top:187px;font-size:11.7px;letter-spacing:-0.82px;color:#000;font-weight:bold;left:76px;">Musterfirma</span><span style="top:199px;font-size:13.0px;letter-spacing:-0.91px;color:#000;left:76px;">Frau Annette Mustermann</span><span style="top:211px;font-size:14.3px;letter-spacing:-1.0px;color:#000;left:76px;">22304 Hamburg</span><i style="left:76px;top:227px;width:76px;height:1px;background:#666"></i><span style="top:287px;font-size:11.7px;letter-spacing:-0.82px;color:#000;opacity:0.7;left:436px;">Datum</span><span style="top:287px;font-size:11.7px;letter-spacing:-0.82px;color:#000;opacity:0.7;left:548px;">01.07.2011</span><span style="top:300px;font-size:11.7px;letter-spacing:-0.82px;color:#000;opacity:0.7;left:436px;">Rechnungsnr.</span><span style="top:300px;font-size:11.7px;letter-spacing:-0.82px;color:#000;opacity:0.7;left:548px;">2011-0123</span><span style="top:313px;font-size:11.7px;letter-spacing:-0.82px;color:#000;opacity:0.7;left:436px;">Kundennr.</span><span style="top:313px;font-size:11.7px;letter-spacing:-0.82px;color:#000;opacity:0.7;left:548px;">10007</span><span style="top:326px;font-size:11.7px;letter-spacing:-0.82px;color:#000;opacity:0.7;left:436px;">Ansprechpartner</span><span style="top:326px;font-size:11.7px;letter-spacing:-0.82px;color:#000;opacity:0.7;left:548px;">Hans Mustermann</span><span style="top:359px;font-size:14.3px;letter-spacing:-1.0px;color:#000;font-weight:bold;left:76px;">Rechnung</span><span style="top:397px;font-size:11.7px;letter-spacing:-0.82px;color:#000;opacity:0.7;left:76px;">Sehr geehrte Frau Mustermann,</span><span style="top:419px;font-size:11.7px;letter-spacing:-0.82px;color:#000;font-weight:bold;opacity:0.8;left:76px;">wir erlauben uns, wie folgt in Rechnung zu stellen:</span><i style="left:76px;top:445px;width:592px;height:16px;background:#dadada"></i><span style="top:446px;font-size:10.4px;letter-spacing:-0.73px;color:#000;font-weight:bold;opacity:0.5;left:78px;">Pos</span><span style="top:446px;font-size:10.4px;letter-spacing:-0.73px;color:#000;font-weight:bold;opacity:0.5;left:112px;">Anzahl</span><span style="top:446px;font-size:10.4px;letter-spacing:-0.73px;color:#000;font-weight:bold;opacity:0.5;left:140px;">Einheit</span><span style="top:446px;font-size:10.4px;letter-spacing:-0.73px;color:#000;font-weight:bold;opacity:0.5;left:172px;">Art.Nr.</span><span style="top:446px;font-size:10.4px;letter-spacing:-0.73px;color:#000;font-weight:bold;opacity:0.5;left:250px;">Bezeichnung</span><span style="top:469px;font-size:11.7px;letter-spacing:-0.82px;color:#000;opacity:0.5;left:78px;">1</span><span style="top:469px;font-size:11.7px;letter-spacing:-0.82px;color:#000;font-weight:bold;left:118px;">3</span><span style="top:469px;font-size:11.7px;letter-spacing:-0.82px;color:#000;font-weight:bold;left:140px;">Stk.</span><span style="top:469px;font-size:11.7px;letter-spacing:-0.82px;color:#000;font-weight:bold;opacity:0.7;left:172px;">BL0001</span><span style="top:469px;font-size:13.0px;letter-spacing:-0.91px;color:#000;font-weight:bold;left:250px;">Blendenstoff Arkadien</span><span style="top:489px;font-size:11.7px;letter-spacing:-0.82px;color:#000;opacity:0.5;left:78px;">2</span><span style="top:489px;font-size:11.7px;letter-spacing:-0.82px;color:#000;font-weight:bold;left:118px;">3</span><span style="top:489px;font-size:11.7px;letter-spacing:-0.82px;color:#000;font-weight:bold;left:140px;">Stk.</span><span style="top:489px;font-size:11.7px;letter-spacing:-0.82px;color:#000;font-weight:bold;opacity:0.7;left:172px;">BL0001</span><span style="top:489px;font-size:13.0px;letter-spacing:-0.91px;color:#000;font-weight:bold;left:250px;">Blendenaufsatz Zierabschluß links</span><span style="top:509px;font-size:11.7px;letter-spacing:-0.82px;color:#000;opacity:0.5;left:78px;">3</span><span style="top:509px;font-size:11.7px;letter-spacing:-0.82px;color:#000;font-weight:bold;left:118px;">3</span><span style="top:509px;font-size:11.7px;letter-spacing:-0.82px;color:#000;font-weight:bold;left:140px;">Stk.</span><span style="top:509px;font-size:11.7px;letter-spacing:-0.82px;color:#000;font-weight:bold;opacity:0.7;left:172px;">BL0001</span><span style="top:509px;font-size:13.0px;letter-spacing:-0.91px;color:#000;font-weight:bold;left:250px;">Gehäuse Nussbaum natur, Größe 47 bis 51</span><i style="left:76px;top:549px;width:592px;height:14px;background:#ebebeb"></i><span style="top:575px;font-size:11.7px;letter-spacing:-0.82px;color:#000;opacity:0.5;left:78px;">4</span><span style="top:575px;font-size:11.7px;letter-spacing:-0.82px;color:#000;font-weight:bold;left:118px;">3</span><span style="top:575px;font-size:11.7px;letter-spacing:-0.82px;color:#000;font-weight:bold;left:140px;">Stk.</span><span style="top:575px;font-size:11.7px;letter-spacing:-0.82px;color:#000;font-weight:bold;opacity:0.7;left:172px;">BL0001</span><span style="top:575px;font-size:13.0px;letter-spacing:-0.91px;color:#000;font-weight:bold;left:250px;">Transportbänder 2,5 m verzinkt</span><span style="top:595px;font-size:11.7px;letter-spacing:-0.82px;color:#000;opacity:0.5;left:78px;">5</span><span style="top:595px;font-size:11.7px;letter-spacing:-0.82px;color:#000;font-weight:bold;left:118px;">3</span><span style="top:595px;font-size:11.7px;letter-spacing:-0.82px;color:#000;font-weight:bold;left:140px;">Stk.</span><span style="top:595px;font-size:11.7px;letter-spacing:-0.82px;color:#000;font-weight:bold;opacity:0.7;left:172px;">BL0001</span><span style="top:595px;font-size:13.0px;letter-spacing:-0.91px;color:#000;font-weight:bold;left:250px;">Topfscharnier vernickelt</span><span style="top:617px;font-size:11.7px;letter-spacing:-0.82px;color:#000;opacity:0.6;left:76px;">Summe</span><span style="top:617px;font-size:13.0px;letter-spacing:-0.91px;color:#000;opacity:0.7;right:34px;">536,07 €</span><span style="top:651px;font-size:11.7px;letter-spacing:-0.82px;color:#000;font-weight:bold;opacity:0.8;left:76px;">Mehrwertsteuer 19 % auf 536,07 € netto</span><span style="top:651px;font-size:13.0px;letter-spacing:-0.91px;color:#000;opacity:0.7;right:34px;">101,85 €</span><i style="left:76px;top:667px;width:592px;height:18px;background:#d0d0d0"></i><span style="top:667px;font-size:14.3px;letter-spacing:-1.0px;color:#000;font-weight:bold;left:78px;">Gesamtbetrag</span><span style="top:667px;font-size:14.3px;letter-spacing:-1.0px;color:#000;font-weight:bold;right:34px;">637,92 €</span><span style="top:693px;font-size:11.7px;letter-spacing:-0.82px;color:#000;font-weight:bold;opacity:0.8;left:76px;">Sofern kein Datum angegeben, entspricht das Lieferdatum dem Rechnungsdatum.</span><span style="top:715px;font-size:10.4px;letter-spacing:-0.73px;color:#000;font-weight:bold;opacity:0.8;left:76px;">Zahlungsbedingungen</span><span style="top:725px;font-size:10.4px;letter-spacing:-0.73px;color:#000;opacity:0.7;left:84px;">Zahlbar innerhalb von 14 Tagen ohne Abzug, danach netto.</span><span style="top:737px;font-size:9.1px;letter-spacing:-0.64px;color:#000;opacity:0.5;left:92px;">Ihr Team</span></div></div>
 <div class="th" style="left:471px;top:199px"><div class="pg" style="transform:scale(.14,.1433)"><span style="top:183.5px;font-size:11.7px;letter-spacing:-0.82px;color:#000;font-weight:bold;left:76px;">Musterfirma</span><span style="top:197.1px;font-size:13.0px;letter-spacing:-0.91px;color:#000;font-weight:bold;left:76px;">Frau Annette Mustermann</span><span style="top:210.7px;font-size:14.3px;letter-spacing:-1.0px;color:#000;font-weight:bold;left:76px;">22304 Hamburg</span><i style="left:76px;top:228.5px;width:70px;height:1px;background:#444"></i><span style="top:342.0px;font-size:13.0px;letter-spacing:-0.91px;color:#000;font-weight:bold;left:76px;">Gutschrift</span><span style="top:357.8px;font-size:14.3px;letter-spacing:-1.0px;color:#000;font-weight:bold;left:76px;">zur Rechnung Nr. 2011-0123 vom 01.07.2011</span><span style="top:382.7px;font-size:11.7px;letter-spacing:-0.82px;color:#000;font-weight:bold;opacity:0.8;left:76px;">Sehr geehrte Frau Mustermann,</span><span style="top:407.6px;font-size:11.7px;letter-spacing:-0.82px;color:#000;font-weight:bold;opacity:0.8;left:76px;">wir stornieren folgende Positionen:</span><i style="left:76px;top:432.3px;width:592px;height:14px;background:#cfcfcf"></i><span style="top:432.5px;font-size:10.4px;letter-spacing:-0.73px;color:#000;font-weight:bold;opacity:0.8;left:78px;">Pos</span><span style="top:432.5px;font-size:10.4px;letter-spacing:-0.73px;color:#000;font-weight:bold;opacity:0.8;left:88px;">Anzahl</span><span style="top:432.5px;font-size:10.4px;letter-spacing:-0.73px;color:#000;font-weight:bold;opacity:0.8;left:118px;">Einheit</span><span style="top:432.5px;font-size:10.4px;letter-spacing:-0.73px;color:#000;font-weight:bold;opacity:0.8;left:148px;">Art.Nr.</span><span style="top:459.7px;font-size:11.7px;letter-spacing:-0.82px;color:#000;opacity:0.4;left:78px;">1</span><span style="top:459.7px;font-size:11.7px;letter-spacing:-0.82px;color:#000;opacity:0.6;left:96px;">3</span><span style="top:459.7px;font-size:11.7px;letter-spacing:-0.82px;color:#000;font-weight:bold;left:118px;">Stk.</span><span style="top:459.7px;font-size:11.7px;letter-spacing:-0.82px;color:#000;font-weight:bold;opacity:0.8;left:148px;">BL0001</span><span style="top:480.1px;font-size:11.7px;letter-spacing:-0.82px;color:#000;opacity:0.4;left:78px;">2</span><span style="top:480.1px;font-size:11.7px;letter-spacing:-0.82px;color:#000;opacity:0.6;left:96px;">3</span><span style="top:480.1px;font-size:11.7px;letter-spacing:-0.82px;color:#000;font-weight:bold;left:118px;">Stk.</span><span style="top:480.1px;font-size:11.7px;letter-spacing:-0.82px;color:#000;font-weight:bold;opacity:0.8;left:148px;">BL0001</span><span style="top:500.5px;font-size:11.7px;letter-spacing:-0.82px;color:#000;opacity:0.4;left:78px;">3</span><span style="top:500.5px;font-size:11.7px;letter-spacing:-0.82px;color:#000;opacity:0.6;left:96px;">3</span><span style="top:500.5px;font-size:11.7px;letter-spacing:-0.82px;color:#000;font-weight:bold;left:118px;">Stk.</span><span style="top:500.5px;font-size:11.7px;letter-spacing:-0.82px;color:#000;font-weight:bold;opacity:0.8;left:148px;">BL0001</span><span style="top:529.9px;font-size:11.7px;letter-spacing:-0.82px;color:#000;opacity:0.4;left:78px;">4</span><span style="top:529.9px;font-size:11.7px;letter-spacing:-0.82px;color:#000;opacity:0.6;left:96px;">3</span><span style="top:529.9px;font-size:11.7px;letter-spacing:-0.82px;color:#000;font-weight:bold;left:118px;">Stk.</span><span style="top:529.9px;font-size:11.7px;letter-spacing:-0.82px;color:#000;font-weight:bold;opacity:0.8;left:148px;">BL0001</span><span style="top:550.3px;font-size:11.7px;letter-spacing:-0.82px;color:#000;opacity:0.4;left:78px;">5</span><span style="top:550.3px;font-size:11.7px;letter-spacing:-0.82px;color:#000;opacity:0.6;left:96px;">3</span><span style="top:550.3px;font-size:11.7px;letter-spacing:-0.82px;color:#000;font-weight:bold;left:118px;">Stk.</span><span style="top:550.3px;font-size:11.7px;letter-spacing:-0.82px;color:#000;font-weight:bold;opacity:0.8;left:148px;">BL0001</span><span style="top:579.7px;font-size:11.7px;letter-spacing:-0.82px;color:#000;opacity:0.6;left:76px;">Summe</span><span style="top:620.5px;font-size:11.7px;letter-spacing:-0.82px;color:#000;font-weight:bold;opacity:0.8;left:76px;">Mehrwertsteuer 19 % auf 214,80 €</span><i style="left:76px;top:640.6px;width:592px;height:14px;background:#c4c4c4"></i><span style="top:640.8px;font-size:10.4px;letter-spacing:-0.73px;color:#000;font-weight:bold;left:78px;">Gesamtbetrag</span></div></div>
 <span class="cap" style="left:11px;top:166px"><span id="c1a">Gutschrift (Anzahl,</span><br><span id="c1b">Einheit mittig)</span></span>
 <span class="cap" style="left:309px;top:166px"><span id="c3a">Rechnung mit</span><br><span id="c3b">Referenznummer</span></span>
 <span id="c4" class="cap" style="left:458px;top:166px">Stornorechnung</span>
 <span class="cap" style="left:11px;top:362px"><span id="c5a">Rechnung gruppiert nach</span><br><span id="c5b">Lieferscheinnummer</span></span>
 <span id="c6" class="cap" style="left:160px;top:349px">Gutschrift (BizDesign)</span>
 <span class="cap" style="left:309px;top:362px"><span id="c7a">Rechnung ohne Preise in</span><br><span id="c7b">Positionen</span></span>
 <span id="c8" class="cap" style="left:458px;top:349px">Gutschrift (Preis mittig)</span>
</div>
<div id="red"></div>
<div id="blue"></div>
<div id="dots"><b></b></div>
<div class="th" style="left:186px;top:141px"><div class="pg" style="transform:scale(.14,.1405)"><span style="top:186px;font-size:11px;color:#000;left:84px;">Muster GmbH</span><span style="top:200px;font-size:11px;color:#000;left:84px;">Muster Weg 99 x</span><span style="top:214px;font-size:12px;color:#000;left:84px;">22304 Hamburg</span><span style="top:288px;font-size:20px;color:#000;font-weight:bold;left:444px;">Rechnung</span><span style="top:338px;font-size:9px;color:#000;font-weight:bold;left:84px;">Datum</span><span style="top:338px;font-size:9px;color:#000;font-weight:bold;left:158px;">Rechnungsnr.</span><span style="top:338px;font-size:9px;color:#000;font-weight:bold;left:224px;">Kundennr.</span><span style="top:338px;font-size:9px;color:#000;font-weight:bold;left:444px;">Ansprechpartner</span><span style="top:338px;font-size:9px;color:#000;font-weight:bold;right:30px;">Seite</span><span style="top:350px;font-size:11px;color:#000;left:84px;">01.07.2011</span><span style="top:350px;font-size:11px;color:#000;left:158px;">2011071231</span><span style="top:350px;font-size:11px;color:#000;left:224px;">10007</span><span style="top:350px;font-size:11px;color:#000;left:444px;">Hans Mustermann</span><span style="top:350px;font-size:11px;color:#000;right:30px;">1 von 2</span><i style="left:84px;top:367px;width:586px;height:2px;background:#aaa"></i><span style="top:374px;font-size:11px;color:#000;opacity:0.8;left:84px;">Sehr geehrte Damen und Herren,</span><span style="top:397px;font-size:12px;color:#000;left:84px;">wir erlauben uns, wie folgt in Rechnung zu stellen:</span><i style="left:84px;top:424px;width:586px;height:2px;background:#bbb"></i><span style="top:430px;font-size:9px;color:#000;font-weight:bold;left:84px;">Pos</span><span style="top:430px;font-size:9px;color:#000;font-weight:bold;left:108px;">Anzahl</span><span style="top:430px;font-size:9px;color:#000;font-weight:bold;left:148px;">Einheit</span><span style="top:430px;font-size:9px;color:#000;font-weight:bold;left:188px;">Art.Nr.</span><span style="top:430px;font-size:9px;color:#000;font-weight:bold;left:256px;">Bezeichnung</span><span style="top:430px;font-size:9px;color:#000;font-weight:bold;right:110px;">Einzelpreis</span><span style="top:430px;font-size:9px;color:#000;font-weight:bold;right:30px;">Gesamtpreis</span><i style="left:84px;top:444px;width:586px;height:2px;background:#ccc"></i><span style="top:452px;font-size:19px;color:#1e8fff;font-weight:bold;left:84px;">Blenden</span><span style="top:476px;font-size:12px;color:#000;left:84px;">1</span><span style="top:476px;font-size:12px;color:#000;left:120px;">1</span><span style="top:476px;font-size:12px;color:#000;left:150px;">Stk.</span><span style="top:476px;font-size:12px;color:#000;left:188px;">BL 0001</span><span style="top:476px;font-size:12px;color:#000;left:256px;">Blendenstoff Arkadien</span><span style="top:476px;font-size:12px;color:#000;right:110px;">17,90 €</span><span style="top:476px;font-size:12px;color:#000;right:30px;">17,90 €</span><span style="top:492px;font-size:12px;color:#000;left:84px;">2</span><span style="top:492px;font-size:12px;color:#000;left:120px;">6</span><span style="top:492px;font-size:12px;color:#000;left:150px;">Stk.</span><span style="top:492px;font-size:12px;color:#000;left:188px;">BL 0002</span><span style="top:492px;font-size:12px;color:#000;left:256px;">Blendenstoff Oslo</span><span style="top:492px;font-size:12px;color:#000;right:110px;">17,90 €</span><span style="top:492px;font-size:12px;color:#000;right:30px;">107,40 €</span><span style="top:508px;font-size:12px;color:#000;left:84px;">3</span><span style="top:508px;font-size:12px;color:#000;left:120px;">7</span><span style="top:508px;font-size:12px;color:#000;left:150px;">Stk.</span><span style="top:508px;font-size:12px;color:#000;left:188px;">BL 0003</span><span style="top:508px;font-size:12px;color:#000;left:256px;">Blendenstoff Bristol</span><span style="top:508px;font-size:12px;color:#000;right:110px;">17,90 €</span><span style="top:508px;font-size:12px;color:#000;right:30px;">125,30 €</span><span style="top:525px;font-size:12px;color:#000;left:84px;">4</span><span style="top:525px;font-size:12px;color:#000;left:120px;">2</span><span style="top:525px;font-size:12px;color:#000;left:150px;">Stk.</span><span style="top:525px;font-size:12px;color:#000;left:188px;">BL 0004</span><span style="top:525px;font-size:12px;color:#000;left:256px;">Blendenaufsatz Zierabschluß</span><span style="top:525px;font-size:12px;color:#000;right:110px;">20,00 €</span><span style="top:525px;font-size:12px;color:#000;right:30px;">40,00 €</span><i style="left:84px;top:542px;width:586px;height:2px;background:#888"></i><span style="top:551px;font-size:9px;color:#aaa;left:84px;">Zwischensumme Blenden</span><span style="top:549px;font-size:11px;color:#000;opacity:0.7;right:30px;">290,60 €</span><i style="left:84px;top:565px;width:586px;height:2px;background:#ddd"></i><span style="top:573px;font-size:19px;color:#1e8fff;font-weight:bold;left:84px;">Holzanzur</span><span style="top:597px;font-size:12px;color:#000;left:84px;">5</span><span style="top:597px;font-size:12px;color:#000;left:120px;">6</span><span style="top:597px;font-size:12px;color:#000;left:150px;">Stk.</span><span style="top:597px;font-size:12px;color:#000;left:188px;">F-2541</span><span style="top:597px;font-size:12px;color:#000;font-weight:bold;left:256px;">Gehäuse Akazi - Gr. 47 bis 51,95 Ahorn</span><span style="top:597px;font-size:12px;color:#000;right:110px;">30,00 €</span><span style="top:597px;font-size:12px;color:#000;right:30px;">180,00 €</span><span style="top:614px;font-size:12px;color:#000;left:84px;">6</span><span style="top:614px;font-size:12px;color:#000;left:120px;">1</span><span style="top:614px;font-size:12px;color:#000;left:150px;">Stk.</span><span style="top:614px;font-size:12px;color:#000;left:188px;">F-2545</span><span style="top:614px;font-size:12px;color:#000;font-weight:bold;left:256px;">Gehäuse Nussbaum - Gr. 47 bis 51,95 Nuss</span><span style="top:614px;font-size:12px;color:#000;right:110px;">45,00 €</span><span style="top:614px;font-size:12px;color:#000;right:30px;">45,00 €</span><i style="left:84px;top:629px;width:586px;height:2px;background:#888"></i><span style="top:639px;font-size:9px;color:#aaa;left:84px;">Zwischensumme Holzanzur</span><span style="top:637px;font-size:11px;color:#000;opacity:0.7;right:30px;">225,00 €</span><i style="left:84px;top:651px;width:586px;height:2px;background:#ddd"></i><span style="top:663px;font-size:12px;color:#000;left:84px;">7</span><span style="top:663px;font-size:12px;color:#000;left:120px;">5</span><span style="top:663px;font-size:12px;color:#000;left:150px;">Stk.</span><span style="top:663px;font-size:12px;color:#000;left:188px;">BE0001</span><span style="top:663px;font-size:12px;color:#000;left:256px;">Transportbänder</span><span style="top:663px;font-size:12px;color:#000;right:110px;">2,14 €</span><span style="top:663px;font-size:12px;color:#000;right:30px;">10,70 €</span><span style="top:679px;font-size:12px;color:#000;left:84px;">8</span><span style="top:679px;font-size:12px;color:#000;left:120px;">5</span><span style="top:679px;font-size:12px;color:#000;left:150px;">Stk.</span><span style="top:679px;font-size:12px;color:#000;left:188px;">BE0002</span><span style="top:679px;font-size:12px;color:#000;left:256px;">Topfscharnier</span><span style="top:679px;font-size:12px;color:#000;right:110px;">1,33 €</span><span style="top:679px;font-size:12px;color:#000;right:30px;">6,65 €</span><span style="top:695px;font-size:12px;color:#000;left:84px;">9</span><span style="top:695px;font-size:12px;color:#000;left:120px;">2</span><span style="top:695px;font-size:12px;color:#000;left:150px;">Stk.</span><span style="top:695px;font-size:12px;color:#000;left:188px;">BE0003</span><span style="top:695px;font-size:12px;color:#000;left:256px;">Stangenscharnier</span><span style="top:695px;font-size:12px;color:#000;right:110px;">1,56 €</span><span style="top:695px;font-size:12px;color:#000;right:30px;">3,12 €</span><i style="left:84px;top:710px;width:586px;height:2px;background:#ccc"></i><span style="top:718px;font-size:9px;color:#bbb;left:84px;">Zwischensumme</span><span style="top:715px;font-size:12px;color:#000;right:30px;">20,47 €</span><i style="left:84px;top:730px;width:586px;height:2px;background:#ccc"></i><span style="top:740px;font-size:11px;color:#000;font-weight:bold;left:444px;">Summe</span><span style="top:740px;font-size:11px;color:#000;font-weight:bold;right:30px;">536,07 €</span><span style="top:760px;font-size:9px;color:#000;opacity:0.6;left:444px;">Mehrwertsteuer 19 % auf 536,07 € netto</span><span style="top:760px;font-size:9px;color:#000;opacity:0.6;right:30px;">101,85 €</span><i style="left:444px;top:773px;width:226px;height:2px;background:#999"></i><span style="top:778px;font-size:11px;color:#000;font-weight:bold;left:444px;">Gesamtbetrag</span><span style="top:778px;font-size:11px;color:#000;font-weight:bold;right:30px;">637,92 €</span><span style="top:810px;font-size:12px;color:#000;opacity:0.55;left:84px;">Sofern kein Datum angegeben, entspricht das Lieferdatum dem Rechnungsdatum.</span></div></div>
<span id="c2" class="cap" style="left:173px;top:291px">Rechnung (BizDesign)</span>
<div id="sb"><div class="sbtn" style="left:0"><svg width="8" height="10" viewBox="0 0 8 10"><path d="M6.3 1 L1.8 5 L6.3 9 Z" fill="#000"/></svg></div><div id="sth"></div><div class="sbtn" style="left:481px"><svg width="8" height="10" viewBox="0 0 8 10"><path d="M2.7 1 L7.2 5 L2.7 9 Z" fill="#000"/></svg></div></div>
<span id="r1" class="lbl b" style="left:527px;top:127px">Rechnung (BizDesign)</span>
<span id="r2" class="lbl" style="left:527px;top:160px">Autor:</span><span id="r3" class="lbl b" style="left:583px;top:160px">Sönke Köhn</span>
<span id="r4" class="lbl" style="left:527px;top:176px">Kategorie:</span><span id="r5" class="lbl b" style="left:583px;top:176px">BizDesign</span>
<span id="r6" class="lbl" style="left:527px;top:199px">Rechnungsvorlage in einem anderen Design.</span>
<div id="prev"><div id="ppage"><div class="pg" style="transform:scale(.25)"><span style="top:186px;font-size:11px;color:#000;left:84px;">Muster GmbH</span><span style="top:200px;font-size:11px;color:#000;left:84px;">Muster Weg 99 x</span><span style="top:214px;font-size:12px;color:#000;left:84px;">22304 Hamburg</span><span style="top:288px;font-size:20px;color:#000;font-weight:bold;left:444px;">Rechnung</span><span style="top:338px;font-size:9px;color:#000;font-weight:bold;left:84px;">Datum</span><span style="top:338px;font-size:9px;color:#000;font-weight:bold;left:158px;">Rechnungsnr.</span><span style="top:338px;font-size:9px;color:#000;font-weight:bold;left:224px;">Kundennr.</span><span style="top:338px;font-size:9px;color:#000;font-weight:bold;left:444px;">Ansprechpartner</span><span style="top:338px;font-size:9px;color:#000;font-weight:bold;right:30px;">Seite</span><span style="top:350px;font-size:11px;color:#000;left:84px;">01.07.2011</span><span style="top:350px;font-size:11px;color:#000;left:158px;">2011071231</span><span style="top:350px;font-size:11px;color:#000;left:224px;">10007</span><span style="top:350px;font-size:11px;color:#000;left:444px;">Hans Mustermann</span><span style="top:350px;font-size:11px;color:#000;right:30px;">1 von 2</span><i style="left:84px;top:367px;width:586px;height:2px;background:#aaa"></i><span style="top:374px;font-size:11px;color:#000;opacity:0.8;left:84px;">Sehr geehrte Damen und Herren,</span><span style="top:397px;font-size:12px;color:#000;left:84px;">wir erlauben uns, wie folgt in Rechnung zu stellen:</span><i style="left:84px;top:424px;width:586px;height:2px;background:#bbb"></i><span style="top:430px;font-size:9px;color:#000;font-weight:bold;left:84px;">Pos</span><span style="top:430px;font-size:9px;color:#000;font-weight:bold;left:108px;">Anzahl</span><span style="top:430px;font-size:9px;color:#000;font-weight:bold;left:148px;">Einheit</span><span style="top:430px;font-size:9px;color:#000;font-weight:bold;left:188px;">Art.Nr.</span><span style="top:430px;font-size:9px;color:#000;font-weight:bold;left:256px;">Bezeichnung</span><span style="top:430px;font-size:9px;color:#000;font-weight:bold;right:110px;">Einzelpreis</span><span style="top:430px;font-size:9px;color:#000;font-weight:bold;right:30px;">Gesamtpreis</span><i style="left:84px;top:444px;width:586px;height:2px;background:#ccc"></i><span style="top:452px;font-size:19px;color:#1e8fff;font-weight:bold;left:84px;">Blenden</span><span style="top:476px;font-size:12px;color:#000;left:84px;">1</span><span style="top:476px;font-size:12px;color:#000;left:120px;">1</span><span style="top:476px;font-size:12px;color:#000;left:150px;">Stk.</span><span style="top:476px;font-size:12px;color:#000;left:188px;">BL 0001</span><span style="top:476px;font-size:12px;color:#000;left:256px;">Blendenstoff Arkadien</span><span style="top:476px;font-size:12px;color:#000;right:110px;">17,90 €</span><span style="top:476px;font-size:12px;color:#000;right:30px;">17,90 €</span><span style="top:492px;font-size:12px;color:#000;left:84px;">2</span><span style="top:492px;font-size:12px;color:#000;left:120px;">6</span><span style="top:492px;font-size:12px;color:#000;left:150px;">Stk.</span><span style="top:492px;font-size:12px;color:#000;left:188px;">BL 0002</span><span style="top:492px;font-size:12px;color:#000;left:256px;">Blendenstoff Oslo</span><span style="top:492px;font-size:12px;color:#000;right:110px;">17,90 €</span><span style="top:492px;font-size:12px;color:#000;right:30px;">107,40 €</span><span style="top:508px;font-size:12px;color:#000;left:84px;">3</span><span style="top:508px;font-size:12px;color:#000;left:120px;">7</span><span style="top:508px;font-size:12px;color:#000;left:150px;">Stk.</span><span style="top:508px;font-size:12px;color:#000;left:188px;">BL 0003</span><span style="top:508px;font-size:12px;color:#000;left:256px;">Blendenstoff Bristol</span><span style="top:508px;font-size:12px;color:#000;right:110px;">17,90 €</span><span style="top:508px;font-size:12px;color:#000;right:30px;">125,30 €</span><span style="top:525px;font-size:12px;color:#000;left:84px;">4</span><span style="top:525px;font-size:12px;color:#000;left:120px;">2</span><span style="top:525px;font-size:12px;color:#000;left:150px;">Stk.</span><span style="top:525px;font-size:12px;color:#000;left:188px;">BL 0004</span><span style="top:525px;font-size:12px;color:#000;left:256px;">Blendenaufsatz Zierabschluß</span><span style="top:525px;font-size:12px;color:#000;right:110px;">20,00 €</span><span style="top:525px;font-size:12px;color:#000;right:30px;">40,00 €</span><i style="left:84px;top:542px;width:586px;height:2px;background:#888"></i><span style="top:551px;font-size:9px;color:#aaa;left:84px;">Zwischensumme Blenden</span><span style="top:549px;font-size:11px;color:#000;opacity:0.7;right:30px;">290,60 €</span><i style="left:84px;top:565px;width:586px;height:2px;background:#ddd"></i><span style="top:573px;font-size:19px;color:#1e8fff;font-weight:bold;left:84px;">Holzanzur</span><span style="top:597px;font-size:12px;color:#000;left:84px;">5</span><span style="top:597px;font-size:12px;color:#000;left:120px;">6</span><span style="top:597px;font-size:12px;color:#000;left:150px;">Stk.</span><span style="top:597px;font-size:12px;color:#000;left:188px;">F-2541</span><span style="top:597px;font-size:12px;color:#000;font-weight:bold;left:256px;">Gehäuse Akazi - Gr. 47 bis 51,95 Ahorn</span><span style="top:597px;font-size:12px;color:#000;right:110px;">30,00 €</span><span style="top:597px;font-size:12px;color:#000;right:30px;">180,00 €</span><span style="top:614px;font-size:12px;color:#000;left:84px;">6</span><span style="top:614px;font-size:12px;color:#000;left:120px;">1</span><span style="top:614px;font-size:12px;color:#000;left:150px;">Stk.</span><span style="top:614px;font-size:12px;color:#000;left:188px;">F-2545</span><span style="top:614px;font-size:12px;color:#000;font-weight:bold;left:256px;">Gehäuse Nussbaum - Gr. 47 bis 51,95 Nuss</span><span style="top:614px;font-size:12px;color:#000;right:110px;">45,00 €</span><span style="top:614px;font-size:12px;color:#000;right:30px;">45,00 €</span><i style="left:84px;top:629px;width:586px;height:2px;background:#888"></i><span style="top:639px;font-size:9px;color:#aaa;left:84px;">Zwischensumme Holzanzur</span><span style="top:637px;font-size:11px;color:#000;opacity:0.7;right:30px;">225,00 €</span><i style="left:84px;top:651px;width:586px;height:2px;background:#ddd"></i><span style="top:663px;font-size:12px;color:#000;left:84px;">7</span><span style="top:663px;font-size:12px;color:#000;left:120px;">5</span><span style="top:663px;font-size:12px;color:#000;left:150px;">Stk.</span><span style="top:663px;font-size:12px;color:#000;left:188px;">BE0001</span><span style="top:663px;font-size:12px;color:#000;left:256px;">Transportbänder</span><span style="top:663px;font-size:12px;color:#000;right:110px;">2,14 €</span><span style="top:663px;font-size:12px;color:#000;right:30px;">10,70 €</span><span style="top:679px;font-size:12px;color:#000;left:84px;">8</span><span style="top:679px;font-size:12px;color:#000;left:120px;">5</span><span style="top:679px;font-size:12px;color:#000;left:150px;">Stk.</span><span style="top:679px;font-size:12px;color:#000;left:188px;">BE0002</span><span style="top:679px;font-size:12px;color:#000;left:256px;">Topfscharnier</span><span style="top:679px;font-size:12px;color:#000;right:110px;">1,33 €</span><span style="top:679px;font-size:12px;color:#000;right:30px;">6,65 €</span><span style="top:695px;font-size:12px;color:#000;left:84px;">9</span><span style="top:695px;font-size:12px;color:#000;left:120px;">2</span><span style="top:695px;font-size:12px;color:#000;left:150px;">Stk.</span><span style="top:695px;font-size:12px;color:#000;left:188px;">BE0003</span><span style="top:695px;font-size:12px;color:#000;left:256px;">Stangenscharnier</span><span style="top:695px;font-size:12px;color:#000;right:110px;">1,56 €</span><span style="top:695px;font-size:12px;color:#000;right:30px;">3,12 €</span><i style="left:84px;top:710px;width:586px;height:2px;background:#ccc"></i><span style="top:718px;font-size:9px;color:#bbb;left:84px;">Zwischensumme</span><span style="top:715px;font-size:12px;color:#000;right:30px;">20,47 €</span><i style="left:84px;top:730px;width:586px;height:2px;background:#ccc"></i><span style="top:740px;font-size:11px;color:#000;font-weight:bold;left:444px;">Summe</span><span style="top:740px;font-size:11px;color:#000;font-weight:bold;right:30px;">536,07 €</span><span style="top:760px;font-size:9px;color:#000;opacity:0.6;left:444px;">Mehrwertsteuer 19 % auf 536,07 € netto</span><span style="top:760px;font-size:9px;color:#000;opacity:0.6;right:30px;">101,85 €</span><i style="left:444px;top:773px;width:226px;height:2px;background:#999"></i><span style="top:778px;font-size:11px;color:#000;font-weight:bold;left:444px;">Gesamtbetrag</span><span style="top:778px;font-size:11px;color:#000;font-weight:bold;right:30px;">637,92 €</span><span style="top:810px;font-size:12px;color:#000;opacity:0.55;left:84px;">Sofern kein Datum angegeben, entspricht das Lieferdatum dem Rechnungsdatum.</span></div></div></div>
<a id="l1" class="lk" style="left:524px;top:539.5px">PDF-Beispiel…</a>
<a id="l2" class="lk" style="left:678px;top:539.5px">PDF-Anleitung…</a>
<div id="dlred"></div>
<div id="dl"><span id="dlt"><u>D</u>ownload</span></div>
<div id="close"><span id="cl1" class="b" style="left:15px"><u>S</u>chließen</span><span id="cl2" style="left:90px">F11</span></div>

</body></html>
